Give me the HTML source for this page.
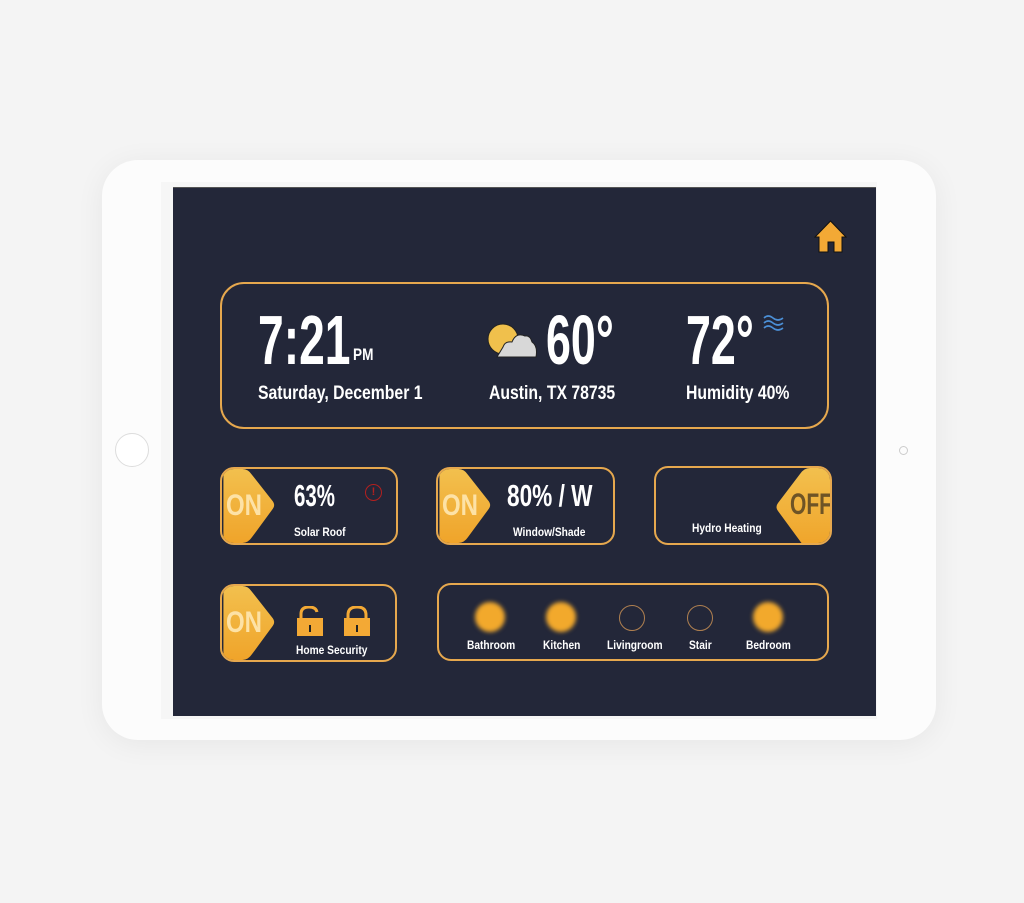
<!DOCTYPE html>
<html><head><style>
*{margin:0;padding:0;box-sizing:border-box}
body{width:1024px;height:903px;background:#f4f4f4;position:relative;overflow:hidden;font-family:"Liberation Sans Narrow","Liberation Sans",sans-serif;font-weight:bold;color:#fff}
.dev{position:absolute;left:102px;top:160px;width:834px;height:580px;background:#fcfcfc;border-radius:36px;box-shadow:0 4px 30px rgba(0,0,0,0.06)}
.bez{position:absolute;left:161px;top:182px;width:716px;height:537px;background:#f6f6f6}
.scr{position:absolute;left:173px;top:187px;width:703px;height:529px;background:#232739;border-top:1px solid #555}
.btn{position:absolute;left:115px;top:433px;width:34px;height:34px;border-radius:50%;border:1px solid #ddd;background:#fff}
.cam{position:absolute;left:899px;top:446px;width:9px;height:9px;border-radius:50%;border:1px solid #ccc}
.box{position:absolute;border:2px solid #e6a84e;border-radius:14px;overflow:hidden}
.t{position:absolute;white-space:nowrap;transform-origin:left}
.on{position:absolute;left:0;top:0;height:100%}
.ontx{position:absolute;color:#fde2a6;font-size:30px;transform:scaleX(.8);transform-origin:left}
.sm{font-size:12px;transform:scaleX(.85)}
.dot{position:absolute;width:30px;height:30px;border-radius:50%;background:#f2a92c;filter:blur(2px)}
.ring{position:absolute;width:26px;height:26px;border-radius:50%;border:1.5px solid #b08050}
</style></head><body>
<div class="dev"></div>
<div class="bez"></div>
<div class="btn"></div>
<div class="cam"></div>
<div class="scr"></div>
<svg style="position:absolute;left:814px;top:220px" width="33" height="33" viewBox="0 0 33 33"><path d="M16.5 1 L32 17 L28 17 L28 32 L20 32 L20 22 L14 22 L14 32 L5 32 L5 17 L1 17 Z" fill="#f3a935" stroke="#111" stroke-width="1"/></svg>

<div class="box" style="left:220px;top:282px;width:609px;height:147px;border-radius:24px"></div>
<div class="t" style="left:258px;top:300px;font-size:70px;transform:scaleX(.66)">7:21</div>
<div class="t" style="left:353px;top:345px;font-size:17px;transform:scaleX(.8)">PM</div>
<div class="t" style="left:258px;top:383px;font-size:19px;transform:scaleX(.83)">Saturday, December 1</div>
<svg style="position:absolute;left:487px;top:320px" width="52" height="40" viewBox="0 0 52 40"><circle cx="16" cy="19" r="15" fill="#f0c04c" stroke="#222" stroke-width="1"/><path d="M10 37 L16 27 Q18 21 25 22 Q29 12 38 16 Q43 15 45 22 Q51 26 49 37 Z" fill="#d8d8d8" stroke="#222" stroke-width="1"/></svg>
<div class="t" style="left:546px;top:300px;font-size:70px;transform:scaleX(.64)">60°</div>
<div class="t" style="left:489px;top:383px;font-size:19px;transform:scaleX(.83)">Austin, TX 78735</div>
<div class="t" style="left:686px;top:300px;font-size:70px;transform:scaleX(.64)">72°</div>
<svg style="position:absolute;left:763px;top:314px" width="21" height="17" viewBox="0 0 21 17"><g fill="none" stroke="#4b8fd6" stroke-width="1.6"><path d="M1 4 Q5 0 10 4 T20 4"/><path d="M1 9 Q5 5 10 9 T20 9"/><path d="M1 14 Q5 10 10 14 T20 14"/></g></svg>
<div class="t" style="left:686px;top:383px;font-size:19px;transform:scaleX(.83)">Humidity 40%</div>

<!-- Solar -->
<div class="box" style="left:220px;top:467px;width:178px;height:78px"><svg class="on" width="56" height="78" viewBox="0 0 56 78"><defs><linearGradient id="g" x1="0" y1="0" x2="0" y2="1"><stop offset="0" stop-color="#f2c04e"/><stop offset="1" stop-color="#f0a42a"/></linearGradient></defs><path d="M0 0 L20 0 Q26 0 30 6 L52 34 Q55 38 52 42 L30 72 Q26 78 20 78 L0 78 Z" fill="url(#g)"/></svg><div class="ontx" style="left:4px;top:20px">ON</div></div>
<div class="t" style="left:294px;top:478px;font-size:31px;transform:scaleX(.66)">63%</div>
<div class="t sm" style="left:294px;top:525px">Solar Roof</div>
<div style="position:absolute;left:365px;top:484px;width:17px;height:17px;border-radius:50%;border:1.5px solid #b3201f;color:#b3201f;font-size:11px;text-align:center;line-height:14px">!</div>

<!-- Window -->
<div class="box" style="left:436px;top:467px;width:179px;height:78px"><svg class="on" width="56" height="78" viewBox="0 0 56 78"><path d="M0 0 L20 0 Q26 0 30 6 L52 34 Q55 38 52 42 L30 72 Q26 78 20 78 L0 78 Z" fill="url(#g)"/></svg><div class="ontx" style="left:4px;top:20px">ON</div></div>
<div class="t" style="left:507px;top:478px;font-size:31px;transform:scaleX(.73)">80% / W</div>
<div class="t sm" style="left:513px;top:525px">Window/Shade</div>

<!-- Hydro -->
<div class="box" style="left:654px;top:466px;width:178px;height:79px"><svg style="position:absolute;right:0;top:0" width="56" height="79" viewBox="0 0 56 79"><path d="M56 0 L36 0 Q30 0 26 6 L4 35 Q1 39 4 43 L26 73 Q30 79 36 79 L56 79 Z" fill="url(#g)"/></svg><div class="ontx" style="left:134px;top:20px;color:#6e5426;transform:scaleX(.7)">OFF</div></div>
<div class="t sm" style="left:692px;top:521px">Hydro Heating</div>

<!-- Security -->
<div class="box" style="left:220px;top:584px;width:177px;height:78px"><svg class="on" width="56" height="78" viewBox="0 0 56 78"><path d="M0 0 L20 0 Q26 0 30 6 L52 34 Q55 38 52 42 L30 72 Q26 78 20 78 L0 78 Z" fill="url(#g)"/></svg><div class="ontx" style="left:4px;top:20px">ON</div></div>
<svg style="position:absolute;left:296px;top:606px" width="28" height="30" viewBox="0 0 28 30"><path d="M5 12 V8 Q5 1 13 1 Q20 1 21 6" fill="none" stroke="#f3a935" stroke-width="3"/><rect x="1" y="12" width="26" height="18" fill="#f3a935"/><rect x="13" y="19" width="2" height="7" fill="#222"/></svg>
<svg style="position:absolute;left:343px;top:606px" width="28" height="30" viewBox="0 0 28 30"><path d="M5 12 V9 Q5 1 14 1 Q23 1 23 9 V12" fill="none" stroke="#f3a935" stroke-width="3"/><rect x="1" y="12" width="26" height="18" fill="#f3a935"/><rect x="13" y="19" width="2" height="7" fill="#222"/></svg>
<div class="t sm" style="left:296px;top:643px">Home Security</div>

<!-- Rooms -->
<div class="box" style="left:437px;top:583px;width:392px;height:78px"></div>
<div class="dot" style="left:475px;top:602px"></div>
<div class="dot" style="left:546px;top:602px"></div>
<div class="ring" style="left:619px;top:605px"></div>
<div class="ring" style="left:687px;top:605px"></div>
<div class="dot" style="left:753px;top:602px"></div>
<div class="t sm" style="left:467px;top:638px">Bathroom</div>
<div class="t sm" style="left:543px;top:638px">Kitchen</div>
<div class="t sm" style="left:607px;top:638px">Livingroom</div>
<div class="t sm" style="left:689px;top:638px">Stair</div>
<div class="t sm" style="left:746px;top:638px">Bedroom</div>
</body></html>
